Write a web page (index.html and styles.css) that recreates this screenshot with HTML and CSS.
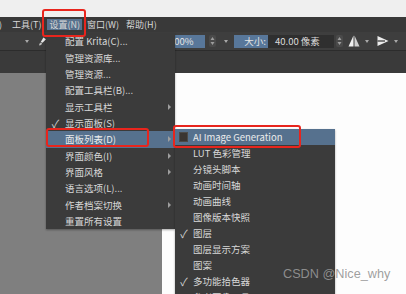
FILE: index.html
```html
<!DOCTYPE html>
<html>

<head>
    <meta charset="UTF-8">
    <meta name="viewport" content="width=device-width, initial-scale=1.0">
    <link rel="stylesheet" href="styles.css">
</head>

<body>
    <div class="app">
        <!-- 窗口标题区 -->
        <div class="titlebar"></div>

        <!-- 菜单栏 -->
        <div class="menubar">
            <span class="mb-item cut">)</span>
            <span class="mb-item">工具(T)</span>
            <span class="mb-item active">设置(N)</span>
            <span class="mb-item">窗口(W)</span>
            <span class="mb-item">帮助(H)</span>
        </div>

        <!-- 工具选项栏 -->
        <div class="toolbar">
            <span class="drop"></span>
            <svg class="brush" viewBox="0 0 8 9">
                <path d="M5 0 L8 2 L4 6 L2 5 Z" fill="#e6e6e6" />
                <path d="M2 5.5 L3.5 6.5 L2.5 8.5 L0 9 L0.5 7 Z" fill="#bdbdbd" />
            </svg>
            <span class="field zoom">100%</span>
            <svg class="spin" viewBox="0 0 7 12">
                <rect x="0" y="0" width="7" height="12" rx="2" fill="#4a4a4a" />
                <path d="M1.5 5 L3.5 2 L5.5 5 Z M1.5 7 L3.5 10 L5.5 7 Z" fill="#9c9c9c" />
            </svg>
            <span class="drop gap-drop"></span>
            <span class="field size-label">大小:</span>
            <span class="field size-value">40.00 像素</span>
            <svg class="spin spin2" viewBox="0 0 7 12">
                <rect x="0" y="0" width="7" height="12" rx="2" fill="#4a4a4a" />
                <path d="M1.5 5 L3.5 2 L5.5 5 Z M1.5 7 L3.5 10 L5.5 7 Z" fill="#9c9c9c" />
            </svg>
            <svg class="tool-icon sym" viewBox="0 0 12 12">
                <path d="M5.5 0.5 L5.5 11.5 L0.5 11.5 Z" fill="#f0f0f0" />
                <path d="M6.5 0.5 L6.5 11.5 L11.5 11.5 Z" fill="#cfcfcf" />
            </svg>
            <span class="drop small-drop"></span>
            <svg class="tool-icon send" viewBox="0 0 12 12">
                <path d="M0.5 1 L11.5 6 L0.5 11 Z" fill="#ececec" />
                <path d="M0.5 6 L8 6" stroke="#3e3e3e" stroke-width="1.3" />
            </svg>
            <span class="drop small-drop"></span>
        </div>

        <!-- 文档标签区 -->
        <div class="tabstrip"></div>

        <!-- 画布区 -->
        <div class="workspace">
            <div class="canvas-gray"></div>
            <div class="canvas-white"></div>
        </div>
    </div>

    <!-- 设置菜单 -->
    <div class="menu settings-menu">
        <div class="mi"><span class="chk"></span><span>配置 Krita(C)...</span></div>
        <div class="mi"><span class="chk"></span><span>管理资源库...</span></div>
        <div class="mi"><span class="chk"></span><span>管理资源...</span></div>
        <div class="mi"><span class="chk"></span><span>配置工具栏(B)...</span></div>
        <div class="mi"><span class="chk"></span><span>显示工具栏</span><span class="arrow"></span></div>
        <div class="mi"><span class="chk">✓</span><span>显示面板(S)</span></div>
        <div class="mi hot"><span class="chk"></span><span>面板列表(D)</span><span class="arrow"></span></div>
        <div class="mi"><span class="chk"></span><span>界面颜色(I)</span><span class="arrow"></span></div>
        <div class="mi"><span class="chk"></span><span>界面风格</span><span class="arrow"></span></div>
        <div class="mi"><span class="chk"></span><span>语言选项(L)...</span></div>
        <div class="mi"><span class="chk"></span><span>作者档案切换</span><span class="arrow"></span></div>
        <div class="mi"><span class="chk"></span><span>重置所有设置</span></div>
    </div>

    <!-- 面板列表子菜单 -->
    <div class="menu dock-menu">
        <div class="mi hot"><span class="chk"><span class="box"></span></span><span>AI Image Generation</span></div>
        <div class="mi"><span class="chk"></span><span>LUT 色彩管理</span></div>
        <div class="mi"><span class="chk"></span><span>分镜头脚本</span></div>
        <div class="mi"><span class="chk"></span><span>动画时间轴</span></div>
        <div class="mi"><span class="chk"></span><span>动画曲线</span></div>
        <div class="mi"><span class="chk"></span><span>图像版本快照</span></div>
        <div class="mi"><span class="chk">✓</span><span>图层</span></div>
        <div class="mi"><span class="chk"></span><span>图层显示方案</span></div>
        <div class="mi"><span class="chk"></span><span>图案</span></div>
        <div class="mi"><span class="chk">✓</span><span>多功能拾色器</span></div>
        <div class="mi"><span class="chk"></span><span>参考图像工具</span></div>
    </div>

    <!-- 红色标注框 -->
    <div class="mark mark-menu"></div>
    <div class="mark mark-item"></div>
    <div class="mark mark-sub"></div>

    <div class="watermark">CSDN @Nice_why</div>
</body>

</html>
```

FILE: styles.css
```css
/* 基础 */
body {
    margin: 0;
    padding: 0;
    width: 406px;
    height: 294px;
    overflow: hidden;
    position: relative;
    font-family: "Noto Sans CJK SC", "Noto Sans", sans-serif;
    font-size: 9.5px;
    color: #d8d8d8;
    background-color: #fdfdfd;
}

.app {
    display: flex;
    flex-direction: column;
    height: 294px;
}

.titlebar {
    height: 17px;
    background-color: #efefef;
}

/* 菜单栏 */
.menubar {
    height: 15px;
    background-color: #393939;
    display: flex;
    align-items: center;
    font-size: 9px;
}

.mb-item {
    height: 11px;
    line-height: 11px;
    padding: 0 2px;
    margin-right: 3px;
    white-space: nowrap;
}

.mb-item.cut {
    width: 8px;
    box-sizing: border-box;
    padding: 0;
    margin-left: -1px;
    margin-right: 3px;
}

.mb-item.active {
    background-color: #58728e;
    margin-left: 1px;
}

/* 工具选项栏 */
.toolbar {
    height: 18px;
    background-color: #3e3e3e;
    display: flex;
    align-items: center;
}

.drop {
    width: 0;
    height: 0;
    border-left: 2.5px solid transparent;
    border-right: 2.5px solid transparent;
    border-top: 3px solid #a8a8a8;
    margin-left: 25px;
}

.brush {
    width: 7px;
    height: 9px;
    margin-left: 10px;
}

.field {
    height: 13px;
    line-height: 13px;
    white-space: nowrap;
}

.zoom {
    width: 38px;
    margin-left: 121px;
    padding-left: 2px;
    box-sizing: border-box;
    background-color: #58779a;
    color: #e4e4e4;
}

.spin {
    width: 7px;
    height: 12px;
    margin-left: 4px;
}

.gap-drop {
    margin-left: 8px;
}

.size-label {
    width: 34px;
    margin-left: 6px;
    padding-right: 2px;
    box-sizing: border-box;
    text-align: right;
    background-color: #58779a;
    color: #e4e4e4;
}

.size-value {
    width: 66px;
    padding-left: 7px;
    box-sizing: border-box;
    background-color: #2f2f2f;
    color: #dcdcdc;
}

.spin2 {
    margin-left: 2px;
}

.tool-icon {
    width: 12px;
    height: 12px;
}

.sym {
    margin-left: 5px;
}

.small-drop {
    margin-left: 5px;
}

.send {
    margin-left: 8px;
}

/* 标签区和画布 */
.tabstrip {
    height: 22px;
    background-color: #3a3a3a;
    border-top: 1px solid #2c2c2c;
}

.workspace {
    flex: 1;
    display: flex;
}

.canvas-gray {
    width: 162px;
    background-color: #7f7f7f;
}

.canvas-white {
    flex: 1;
    background-color: #fdfdfd;
}

/* 下拉菜单 */
.menu {
    position: absolute;
    background-color: #3b3b3b;
    box-shadow: 0 1px 2px rgba(0, 0, 0, 0.35);
}

.settings-menu {
    left: 46px;
    top: 33px;
    width: 129px;
    height: 196px;
}

.dock-menu {
    left: 175px;
    top: 129px;
    width: 160px;
    height: 170px;
}

.mi {
    display: flex;
    align-items: center;
    height: 16.36px;
    white-space: nowrap;
    position: relative;
}

.dock-menu .mi {
    height: 16.06px;
}

.chk {
    width: 19px;
    flex-shrink: 0;
    text-align: center;
    font-size: 11px;
    color: #cfcfcf;
    display: flex;
    justify-content: center;
    align-items: center;
}

.dock-menu .chk {
    width: 18px;
}

.mi.hot {
    background-color: #56718e;
    color: #ececec;
}

.box {
    width: 9px;
    height: 10px;
    box-sizing: border-box;
    background-color: #3a3532;
    border: 1px solid #4c4a48;
    margin-left: -1px;
}

.arrow {
    position: absolute;
    right: 4px;
    width: 0;
    height: 0;
    border-top: 3px solid transparent;
    border-bottom: 3px solid transparent;
    border-left: 3px solid #9e9e9e;
}

/* 红色标注 */
.mark {
    position: absolute;
    border: 2px solid #e8251d;
    border-radius: 3px;
    box-sizing: border-box;
}

.mark-menu {
    left: 42px;
    top: 9px;
    width: 44px;
    height: 28px;
}

.mark-item {
    left: 46px;
    top: 128px;
    width: 103px;
    height: 19px;
}

.mark-sub {
    left: 173px;
    top: 125px;
    width: 128px;
    height: 23px;
}

.watermark {
    position: absolute;
    left: 283px;
    top: 267px;
    font-family: "Liberation Sans", Arial, sans-serif;
    font-size: 12.7px;
    color: rgba(150, 150, 150, 0.92);
}
```
